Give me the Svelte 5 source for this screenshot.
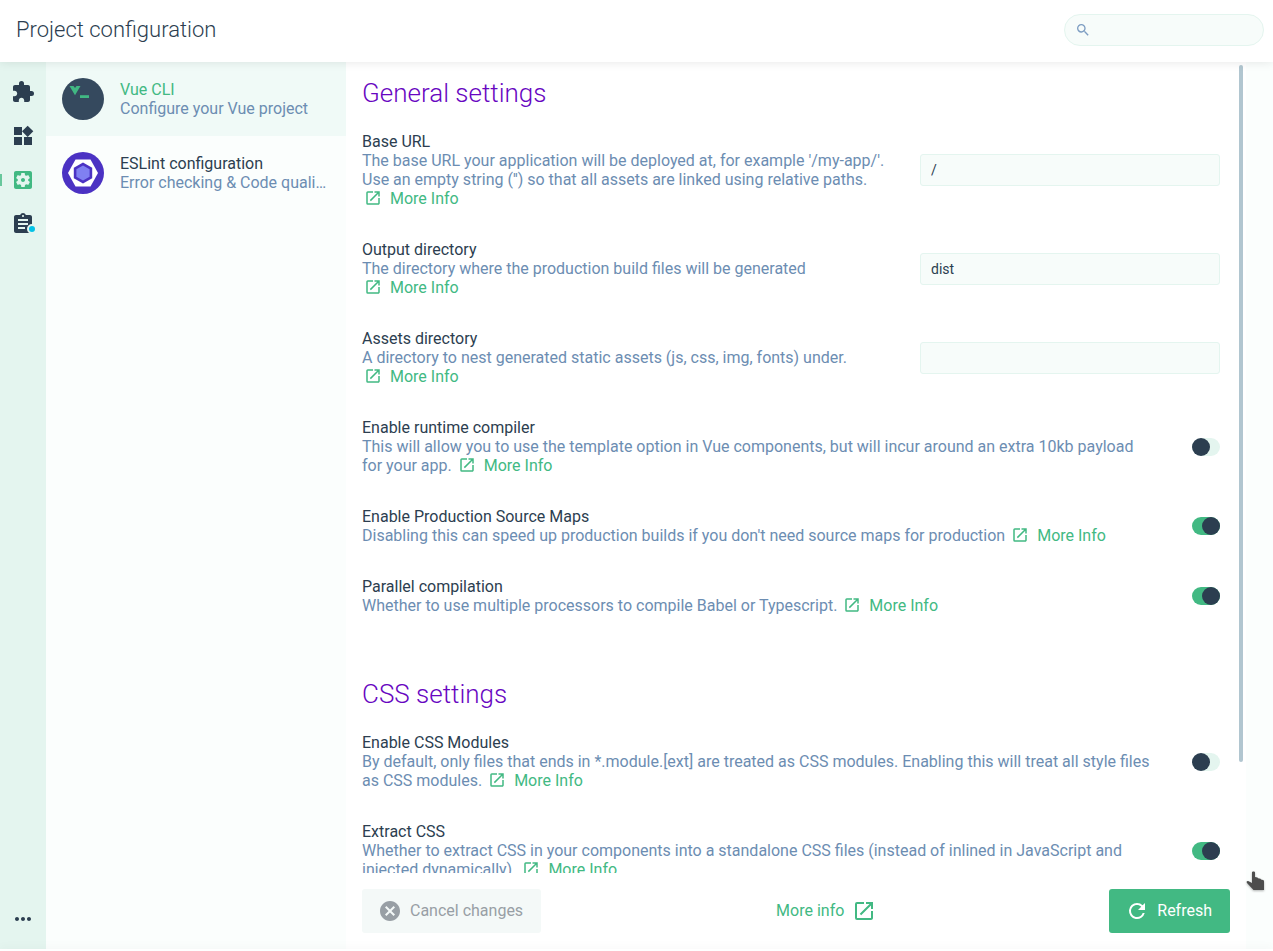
<script lang="ts">
  interface Setting {
    id: string;
    label: string;
    description: string;
    type: 'input' | 'switch';
    value?: string;
    checked?: boolean;
  }

  interface Section {
    title: string;
    settings: Setting[];
  }

  let sections = $state<Section[]>([
    {
      title: 'General settings',
      settings: [
        {
          id: 'base-url',
          label: 'Base URL',
          description:
            "The base URL your application will be deployed at, for example '/my-app/'. Use an empty string ('') so that all assets are linked using relative paths.",
          type: 'input',
          value: '/'
        },
        {
          id: 'output-dir',
          label: 'Output directory',
          description: 'The directory where the production build files will be generated',
          type: 'input',
          value: 'dist'
        },
        {
          id: 'assets-dir',
          label: 'Assets directory',
          description: 'A directory to nest generated static assets (js, css, img, fonts) under.',
          type: 'input',
          value: ''
        },
        {
          id: 'runtime-compiler',
          label: 'Enable runtime compiler',
          description:
            'This will allow you to use the template option in Vue components, but will incur around an extra 10kb payload for your app.',
          type: 'switch',
          checked: false
        },
        {
          id: 'source-maps',
          label: 'Enable Production Source Maps',
          description:
            "Disabling this can speed up production builds if you don't need source maps for production",
          type: 'switch',
          checked: true
        },
        {
          id: 'parallel',
          label: 'Parallel compilation',
          description: 'Whether to use multiple processors to compile Babel or Typescript.',
          type: 'switch',
          checked: true
        }
      ]
    },
    {
      title: 'CSS settings',
      settings: [
        {
          id: 'css-modules',
          label: 'Enable CSS Modules',
          description:
            'By default, only files that ends in *.module.[ext] are treated as CSS modules. Enabling this will treat all style files as CSS modules.',
          type: 'switch',
          checked: false
        },
        {
          id: 'css-extract',
          label: 'Extract CSS',
          description:
            'Whether to extract CSS in your components into a standalone CSS files (instead of inlined in JavaScript and injected dynamically).',
          type: 'switch',
          checked: true
        }
      ]
    }
  ]);

  const views = [
    {
      name: 'Plugins',
      path: 'M20.5 11H19V7c0-1.1-.9-2-2-2h-4V3.500a2.500 2.500 0 0 0-5 0V5H4c-1.100 0-1.990.9-1.990 2v3.800H3.500c1.490 0 2.700 1.210 2.700 2.700s-1.210 2.700-2.700 2.700H2V20c0 1.100.9 2 2 2h3.800v-1.500c0-1.490 1.210-2.700 2.700-2.700s2.700 1.210 2.700 2.700V22H17c1.100 0 2-.9 2-2v-4h1.500a2.500 2.500 0 0 0 0-5z'
    },
    {
      name: 'Dependencies',
      path: 'M13 13v8h8v-8h-8zM3 21h8v-8H3v8zM3 3v8h8V3H3zm13.660-1.310L11 7.340 16.660 13l5.660-5.660-5.660-5.650z'
    },
    {
      name: 'Configuration',
      active: true,
      path: 'M12 10c-1.100 0-2 .9-2 2s.9 2 2 2 2-.9 2-2-.9-2-2-2zm7-7H5c-1.110 0-2 .9-2 2v14c0 1.100.89 2 2 2h14c1.110 0 2-.9 2-2V5c0-1.100-.89-2-2-2zm-1.750 9c0 .23-.02.46-.05.68l1.480 1.160c.13.11.17.3.08.45l-1.400 2.420c-.09.15-.27.21-.43.15l-1.740-.7c-.36.28-.76.51-1.180.69l-.26 1.850c-.03.17-.18.3-.35.3h-2.800c-.17 0-.32-.13-.35-.29l-.26-1.850c-.43-.18-.82-.41-1.180-.69l-1.740.7c-.16.06-.34 0-.43-.15l-1.400-2.420c-.09-.15-.05-.34.08-.45l1.480-1.160c-.03-.23-.05-.46-.05-.69s.02-.46.05-.68l-1.480-1.160c-.13-.11-.17-.3-.08-.45l1.400-2.420c.09-.15.27-.21.43-.15l1.740.7c.36-.28.76-.51 1.180-.69l.26-1.850c.03-.17.18-.3.35-.3h2.800c.17 0 .32.13.35.29l.26 1.850c.43.18.82.41 1.180.69l1.740-.7c.16-.06.34 0 .43.15l1.400 2.420c.09.15.05.34-.08.45l-1.480 1.160c.03.23.05.46.05.69z'
    },
    {
      name: 'Tasks',
      badge: true,
      path: 'M19 3h-4.180C14.400 1.840 13.300 1 12 1c-1.300 0-2.400.84-2.820 2H5c-1.100 0-2 .9-2 2v14c0 1.100.9 2 2 2h14c1.100 0 2-.9 2-2V5c0-1.100-.9-2-2-2zm-7 0c.55 0 1 .45 1 1s-.45 1-1 1-1-.45-1-1 .45-1 1-1zm2 14H7v-2h7v2zm3-4H7v-2h10v2zm0-4H7V7h10v2z'
    }
  ];
</script>

{#snippet launchIcon()}
  <svg viewBox="0 0 24 24" aria-hidden="true">
    <path
      d="M19 19H5V5h7V3H5a2 2 0 0 0-2 2v14a2 2 0 0 0 2 2h14c1.100 0 2-.9 2-2v-7h-2v7zM14 3v2h3.590l-9.830 9.830 1.410 1.410L19 6.410V10h2V3h-7z"
    />
  </svg>
{/snippet}

<div class="app">
  <header class="top-bar">
    <h1>Project configuration</h1>
    <label class="search">
      <svg viewBox="0 0 24 24" aria-hidden="true">
        <path
          d="M15.500 14h-.79l-.28-.27A6.471 6.471 0 0 0 16 9.500 6.500 6.500 0 1 0 9.500 16c1.610 0 3.090-.59 4.230-1.570l.27.28v.79l5 4.990L20.490 19l-4.990-5zm-6 0C7.010 14 5 11.990 5 9.500S7.010 5 9.500 5 14 7.010 14 9.500 11.990 14 9.500 14z"
        />
      </svg>
      <input type="search" aria-label="Search" />
    </label>
  </header>

  <div class="body">
    <!-- Icon rail -->
    <nav class="rail">
      {#each views as view}
        <button type="button" class="rail-item" class:active={view.active} aria-label={view.name}>
          <svg viewBox="0 0 24 24" aria-hidden="true"><path d={view.path} /></svg>
          {#if view.badge}
            <span class="badge"></span>
          {/if}
        </button>
      {/each}
      <button type="button" class="rail-item more" aria-label="More">
        <svg viewBox="0 0 24 24" aria-hidden="true">
          <path
            d="M6 10c-1.100 0-2 .9-2 2s.9 2 2 2 2-.9 2-2-.9-2-2-2zm12 0c-1.100 0-2 .9-2 2s.9 2 2 2 2-.9 2-2-.9-2-2-2zm-6 0c-1.100 0-2 .9-2 2s.9 2 2 2 2-.9 2-2-.9-2-2-2z"
          />
        </svg>
      </button>
    </nav>

    <!-- Configuration list -->
    <aside class="config-list">
      <a href="#vue-cli" class="config-item selected">
        <svg class="logo" viewBox="0 0 42 42" aria-hidden="true">
          <circle cx="21" cy="21" r="21" fill="#35495e" />
          <path d="M7.500 8h4l1.500 2 1.500-2h4L13 17.200z" fill="#41b883" />
          <path d="M18 17.200h9v2.800h-9z" fill="#41b883" />
        </svg>
        <span class="config-text">
          <span class="name">Vue CLI</span>
          <span class="description">Configure your Vue project</span>
        </span>
      </a>
      <a href="#eslint" class="config-item">
        <svg class="logo" viewBox="0 0 42 42" aria-hidden="true">
          <circle cx="21" cy="21" r="21" fill="#4b32c3" />
          <path d="M13.500 7.500h15L36 21l-7.500 13.500h-15L6 21z" fill="#fff" />
          <path d="M21 10.500l9.200 5.200v10.600L21 31.500l-9.200-5.200V15.700z" fill="#4b32c3" />
          <path d="M21 13.500l6.600 3.700v7.600L21 28.500l-6.600-3.700v-7.600z" fill="#8080f2" />
        </svg>
        <span class="config-text">
          <span class="name">ESLint configuration</span>
          <span class="description">Error checking &amp; Code quality</span>
        </span>
      </a>
    </aside>

    <main class="content">
      <div class="scroll-wrapper">
        <div class="scroll-area">
          {#each sections as section}
            <section>
              <h2>{section.title}</h2>
              {#each section.settings as setting (setting.id)}
                <div class="setting" class:toggle={setting.type === 'switch'}>
                  <div class="setting-text">
                    <label class="name" for={setting.id}>{setting.label}</label>
                    <div class="description">
                      {setting.description}
                      <a href="#{setting.id}" class="more-info">{@render launchIcon()}More Info</a>
                    </div>
                  </div>
                  {#if setting.type === 'input'}
                    <input type="text" class="text-input" id={setting.id} bind:value={setting.value} />
                  {:else}
                    <input
                      type="checkbox"
                      role="switch"
                      class="switch"
                      id={setting.id}
                      bind:checked={setting.checked}
                    />
                  {/if}
                </div>
              {/each}
            </section>
          {/each}
        </div>
        <div class="scroll-thumb"></div>
      </div>

      <footer class="actions">
        <button type="button" class="btn" disabled>
          <svg viewBox="0 0 24 24" aria-hidden="true">
            <path
              d="M12 2C6.470 2 2 6.470 2 12s4.470 10 10 10 10-4.470 10-10S17.530 2 12 2zm5 13.590L15.590 17 12 13.410 8.410 17 7 15.590 10.590 12 7 8.410 8.410 7 12 10.590 15.590 7 17 8.410 13.410 12 17 15.590z"
            />
          </svg>
          Cancel changes
        </button>
        <a href="#docs" class="btn flat">More info{@render launchIcon()}</a>
        <button type="button" class="btn primary">
          <svg viewBox="0 0 24 24" aria-hidden="true">
            <path
              d="M17.650 6.350A7.958 7.958 0 0 0 12 4a8 8 0 1 0 7.730 10h-2.080A5.990 5.990 0 0 1 12 18c-3.310 0-6-2.690-6-6s2.690-6 6-6c1.660 0 3.140.69 4.220 1.780L13 11h7V4l-2.350 2.350z"
            />
          </svg>
          Refresh
        </button>
      </footer>
    </main>
  </div>

  <div class="status-bar"></div>

  <svg class="pointer" viewBox="0 0 18 20" aria-hidden="true">
    <path
      d="M6 1.500c0-1.300 3-1.300 3 0V6l2.500.500.5.800 2.500.400.5.800 2 .4c.8.2 1 .8 1 1.600V19H7.500L1 12c-1-1.300.2-2.500 1.600-1.800L6 12z"
    />
  </svg>
</div>

<style>
  :global(body) {
    margin: 0;
  }

  .app {
    position: relative;
    display: flex;
    flex-direction: column;
    height: 100vh;
    overflow: hidden;
    background: #fff;
    font-family: Roboto, 'Liberation Sans', sans-serif;
    font-size: 16px;
    line-height: 19px;
    color: #2c3e50;
  }

  svg {
    flex-shrink: 0;
    fill: currentColor;
  }

  a {
    color: inherit;
    text-decoration: none;
  }

  button,
  input {
    margin: 0;
    font-family: inherit;
    color: inherit;
  }

  /* Header */
  .top-bar {
    position: relative;
    z-index: 1;
    display: flex;
    align-items: center;
    justify-content: space-between;
    box-sizing: border-box;
    height: 62px;
    padding: 0 9px 2px 16px;
    background: #fff;
    box-shadow: 0 0 10px rgba(0, 0, 0, 0.1);
  }

  h1 {
    margin: 0;
    font-size: 22px;
    font-weight: 300;
    line-height: 28px;
  }

  .search {
    display: flex;
    align-items: center;
    box-sizing: border-box;
    width: 200px;
    height: 32px;
    padding: 0 10px;
    border: 1px solid #e4f5ef;
    border-radius: 16px;
    background: #f7fcfa;
    color: #7d9dc2;
  }

  .search svg {
    width: 16px;
    height: 16px;
  }

  .search input {
    flex: 1;
    min-width: 0;
    border: none;
    outline: none;
    background: transparent;
    font-size: 14px;
  }

  .body {
    display: flex;
    flex: 1;
    min-height: 0;
    background: #fbfefd;
  }

  /* Icon rail */
  .rail {
    display: flex;
    flex-direction: column;
    box-sizing: border-box;
    width: 46px;
    padding: 8px 0;
    background: #e4f5ef;
  }

  .rail-item {
    position: relative;
    display: flex;
    align-items: center;
    justify-content: center;
    height: 44px;
    padding: 0;
    border: none;
    background: none;
    cursor: pointer;
  }

  .rail-item svg {
    width: 24px;
    height: 24px;
  }

  .rail-item.active {
    color: #42b983;
  }

  .rail-item.active::before {
    content: '';
    position: absolute;
    left: 0;
    width: 2px;
    height: 12px;
    background: #68c79c;
  }

  .rail-item.more {
    margin-top: auto;
  }

  .badge {
    position: absolute;
    right: 9px;
    bottom: 12px;
    width: 6px;
    height: 6px;
    border: 2px solid #e4f5ef;
    border-radius: 50%;
    background: #03c2e6;
  }

  /* Configuration list */
  .config-list {
    flex-shrink: 0;
    width: 300px;
  }

  .config-item {
    display: flex;
    align-items: center;
    gap: 16px;
    padding: 16px 19px 16px 16px;
  }

  .config-item.selected {
    background: #f0faf7;
  }

  .config-item.selected .name {
    color: #42b983;
  }

  .logo {
    width: 42px;
    height: 42px;
  }

  .config-text {
    min-width: 0;
  }

  .name {
    display: block;
  }

  .description {
    color: #6c8db2;
  }

  .config-text .description {
    display: block;
    overflow: hidden;
    text-overflow: ellipsis;
    white-space: nowrap;
  }

  /* Settings */
  .content {
    display: flex;
    flex-direction: column;
    flex: 1;
    max-width: 900px;
    min-width: 0;
    background: #fff;
  }

  .scroll-wrapper {
    position: relative;
    flex: 1;
    min-height: 0;
  }

  .scroll-area {
    box-sizing: border-box;
    height: 100%;
    padding: 0 26px 0 16px;
    overflow-y: auto;
    scrollbar-width: none;
  }

  .scroll-thumb {
    position: absolute;
    top: 3px;
    right: 3px;
    width: 4px;
    height: 86%;
    border-radius: 2px;
    background: #b1c6d0;
  }

  section {
    padding: 16px 0 32px;
  }

  h2 {
    margin: 0 0 8px;
    font-size: 26px;
    font-weight: 300;
    line-height: 30px;
    color: #6806c1;
  }

  .setting {
    display: flex;
    align-items: center;
    gap: 16px;
    padding: 16px 0;
  }

  .setting.toggle {
    gap: 40px;
  }

  .setting-text {
    flex: 1;
    min-width: 0;
  }

  .more-info {
    display: inline-flex;
    align-items: flex-start;
    gap: 8px;
    padding: 0 2px;
    color: #42b983;
    vertical-align: top;
    white-space: nowrap;
  }

  .more-info svg {
    width: 18px;
    height: 18px;
  }

  .text-input {
    flex-shrink: 0;
    box-sizing: border-box;
    width: 300px;
    height: 32px;
    padding: 0 10px;
    border: 1px solid #e4f5ef;
    border-radius: 3px;
    outline: none;
    background: #f7fcfa;
    font-size: 14px;
  }

  .switch {
    flex-shrink: 0;
    width: 28px;
    height: 18px;
    border-radius: 9px;
    appearance: none;
    background: #e4f5ef;
    cursor: pointer;
  }

  .switch::before {
    content: '';
    display: block;
    width: 18px;
    height: 18px;
    border-radius: 50%;
    background: #2c3e50;
  }

  .switch:checked {
    background: #42b983;
  }

  .switch:checked::before {
    margin-left: auto;
  }

  /* Bottom actions */
  .actions {
    display: flex;
    align-items: center;
    justify-content: space-between;
    padding: 16px;
  }

  .btn {
    display: flex;
    align-items: center;
    gap: 8px;
    height: 44px;
    padding: 0 18px 0 16px;
    border: none;
    border-radius: 3px;
    background: #f4f9f8;
    font-size: 16px;
    line-height: 20px;
    cursor: pointer;
  }

  .btn svg {
    width: 24px;
    height: 24px;
  }

  .btn:disabled {
    color: #989fa5;
    cursor: default;
  }

  .btn.flat {
    padding: 0 16px 0 18px;
    background: none;
    color: #42b983;
  }

  .btn.primary {
    background: #42b983;
    color: #fff;
  }

  .status-bar {
    position: relative;
    z-index: 1;
    height: 2px;
    background: #fff;
    box-shadow: 0 0 10px rgba(0, 0, 0, 0.1);
  }

  .pointer {
    position: absolute;
    right: 9px;
    bottom: 60px;
    width: 18px;
    height: 20px;
    fill: #4d4d4d;
    filter: drop-shadow(0 1px 1px rgba(0, 0, 0, 0.3));
    pointer-events: none;
  }
</style>
